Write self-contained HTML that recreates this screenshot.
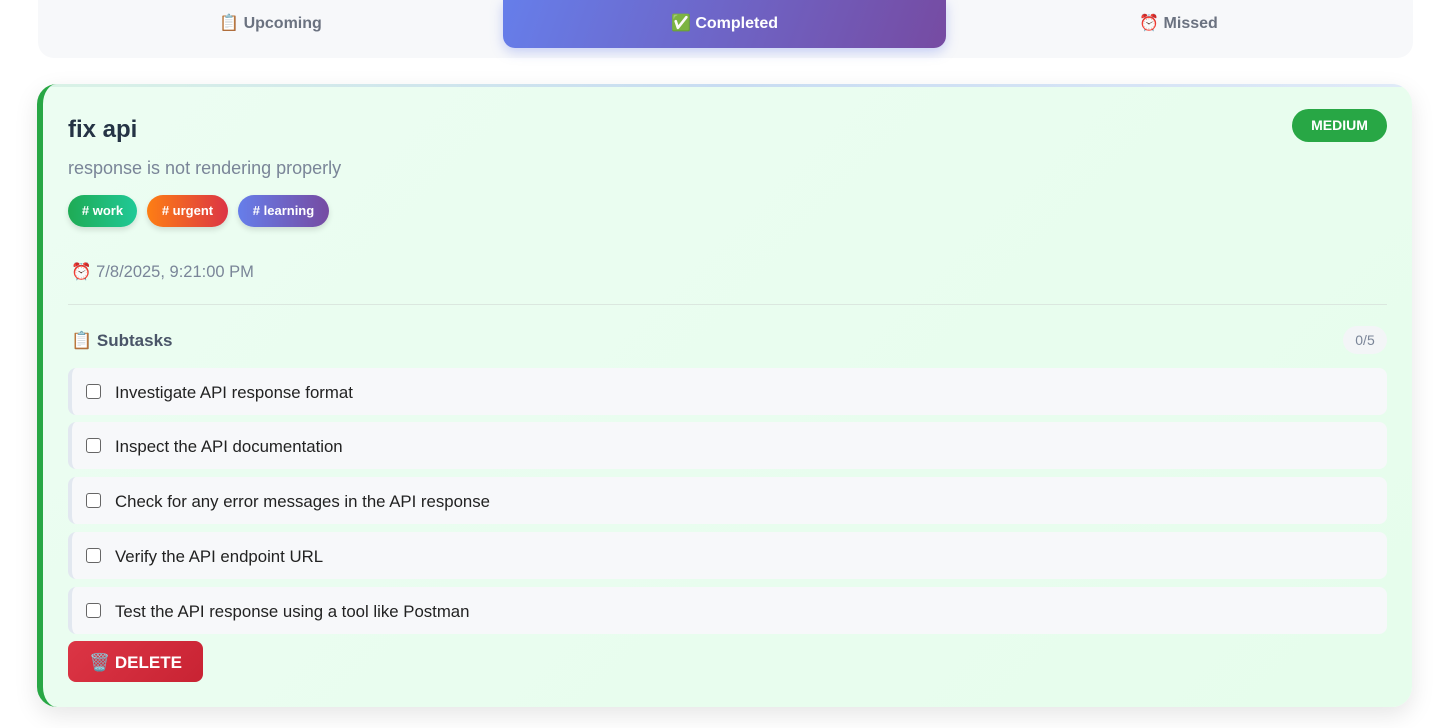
<!DOCTYPE html>
<html><head><meta charset="utf-8"><style>
*{box-sizing:border-box;margin:0;padding:0}
body{width:1443px;height:728px;background:#fff;font-family:"Liberation Sans",sans-serif;overflow:hidden;position:relative}
.tabs{position:absolute;left:38px;top:-20px;width:1375px;height:78px;background:#f7f8fa;border-radius:16px}
.tab{position:absolute;top:0;height:48px;line-height:46px;font-weight:bold;font-size:16px;color:#6b7280;text-align:center}
.act{left:503px;width:443px;top:0;height:48px;background:linear-gradient(110deg,#667eea,#764ba2);color:#fff;border-radius:0 0 12px 12px;box-shadow:0 4px 12px rgba(102,126,234,.35)}
.card{position:absolute;left:37px;top:84px;width:1375px;height:623px;border-radius:20px;background:linear-gradient(135deg,#ecfdf2,#e6fdec);border-left:6px solid #28a745;box-shadow:0 8px 24px rgba(0,0,0,.1);overflow:hidden}
.topline{position:absolute;left:0;right:0;top:0;height:3px;background:linear-gradient(90deg,#d9f2e6,#c8dcf2,#e0eaf8)}
h2{position:absolute;left:25px;top:32px;font-size:24px;color:#253345;font-weight:bold}
.desc{position:absolute;left:25px;top:74px;font-size:18px;color:#7a8598}
.badge{position:absolute;right:25px;top:25px;width:95px;height:33px;border-radius:17px;background:#28a745;color:#fff;font-weight:bold;font-size:14px;text-align:center;line-height:33px}
.tag{position:absolute;top:111px;height:32px;line-height:32px;border-radius:16px;color:#fff;font-weight:bold;font-size:13px;text-align:center;box-shadow:0 3px 6px rgba(0,0,0,.12)}
.date{position:absolute;left:28px;top:179px;font-size:16.5px;color:#7a8598}
.hr{position:absolute;left:25px;right:25px;top:220px;height:1px;background:#dbe7df}
.sub{position:absolute;left:28px;top:247px;font-size:17px;font-weight:bold;color:#4a5568}
.cnt{position:absolute;right:25px;top:242px;width:44px;height:28px;border-radius:14px;background:#f3f5f7;color:#7a8598;font-size:14px;text-align:center;line-height:28px}
.it{position:absolute;left:25px;right:25px;height:47px;background:#f7f8fa;border-radius:8px;border-left:4px solid #e2e8f0;font-size:16.8px;color:#222;line-height:49px;padding-left:43px}
.it:before{content:"";position:absolute;left:14px;top:16px;width:13px;height:13px;border:1.5px solid #666;border-radius:3px;background:#fff}
.del{position:absolute;left:25px;top:557px;width:135px;height:41px;border-radius:8px;background:linear-gradient(135deg,#dc3545,#c82333);color:#fff;font-weight:bold;font-size:17px;line-height:43px;text-align:center}
</style></head><body>
<div class="tabs">
<div class="tab" style="left:0;width:465px;top:20px;line-height:48px">📋 Upcoming</div>
<div class="tab" style="left:908px;width:465px;top:20px;line-height:48px">⏰ Missed</div>
</div>
<div class="tab act" style="position:absolute;line-height:48px">✅ Completed</div>
<div class="card">
<div class="topline"></div>
<h2>fix api</h2>
<div class="badge">MEDIUM</div>
<div class="desc">response is not rendering properly</div>
<div class="tag" style="left:25px;width:69px;background:linear-gradient(90deg,#1fab55,#20c997)"># work</div>
<div class="tag" style="left:104px;width:81px;background:linear-gradient(90deg,#fd7e14,#dc3545)"># urgent</div>
<div class="tag" style="left:195px;width:91px;background:linear-gradient(90deg,#667eea,#764ba2)"># learning</div>
<div class="date">⏰ 7/8/2025, 9:21:00 PM</div>
<div class="hr"></div>
<div class="sub">📋 Subtasks</div>
<div class="cnt">0/5</div>
<div class="it" style="top:284px">Investigate API response format</div>
<div class="it" style="top:338px">Inspect the API documentation</div>
<div class="it" style="top:393px">Check for any error messages in the API response</div>
<div class="it" style="top:448px">Verify the API endpoint URL</div>
<div class="it" style="top:503px">Test the API response using a tool like Postman</div>
<div class="del">🗑️ DELETE</div>
</div>
</body></html>
